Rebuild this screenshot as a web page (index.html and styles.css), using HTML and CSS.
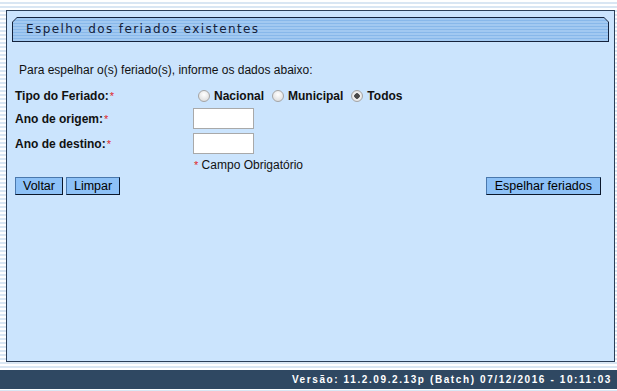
FILE: index.html
```html
<!DOCTYPE html>
<html lang="pt-BR">
<head>
    <meta charset="UTF-8">
    <title>Espelho dos feriados existentes</title>
    <link rel="stylesheet" href="styles.css">
</head>
<body>
    <div class="panel">
        <div class="panel-title">
            <div class="panel-title-inner">Espelho dos feriados existentes</div>
        </div>

        <div class="form">
            <p class="intro">Para espelhar o(s) feriado(s), informe os dados abaixo:</p>

            <div class="fields">
                <label class="field-label">Tipo do Feriado:<span class="req">*</span></label>
                <div class="radios">
                    <label><input type="radio" name="tipo" value="N"> Nacional</label>
                    <label><input type="radio" name="tipo" value="M"> Municipal</label>
                    <label><input type="radio" name="tipo" value="T" checked> Todos</label>
                </div>

                <label class="field-label" for="ano-origem">Ano de origem:<span class="req">*</span></label>
                <div><input type="text" id="ano-origem" class="year-input"></div>

                <label class="field-label" for="ano-destino">Ano de destino:<span class="req">*</span></label>
                <div><input type="text" id="ano-destino" class="year-input"></div>

                <div></div>
                <div class="hint"><span class="req">*</span> Campo Obrigatório</div>
            </div>

            <div class="actions">
                <div class="actions-left">
                    <button class="btn">Voltar</button>
                    <button class="btn">Limpar</button>
                </div>
                <button class="btn btn-wide">Espelhar feriados</button>
            </div>
        </div>
    </div>

    <div class="footer">Versão: 11.2.09.2.13p (Batch) 07/12/2016 - 10:11:03</div>
</body>
</html>
```

FILE: styles.css
```css
body {
    margin: 0;
    height: 391px;
    overflow: hidden;
    font-family: "Liberation Sans", Arial, sans-serif;
    font-size: 12px;
    color: #111;
    background: repeating-linear-gradient(to bottom, #ffffff 0 2px, #d9e6f3 2px 4px);
}
.panel {
    margin: 10px 2px 0 6px;
    height: 350px;
    background-color: #cbe4fd;
    border: 1px solid #2b3f58;
}
.panel-title {
    margin: 6px 5px 0 5px;
    height: 25px;
    padding: 1px;
    box-sizing: border-box;
    background-color: #14233d;
    clip-path: polygon(5px 0, calc(100% - 5px) 0, 100% 5px, 100% 100%, 0 100%, 0 5px);
}
.panel-title-inner {
    height: 100%;
    padding-left: 13px;
    font-family: "DejaVu Sans", Verdana, sans-serif;
    font-size: 12px;
    letter-spacing: 1.4px;
    line-height: 22px;
    color: #13203a;
    background: repeating-linear-gradient(to bottom, #a2c9f1 0 2px, #88b8ea 2px 3px);
    clip-path: polygon(4px 0, calc(100% - 4px) 0, 100% 4px, 100% 100%, 0 100%, 0 4px);
}
.form {
    padding: 0 13px 0 8px;
}
.intro {
    margin: 21px 0 0 4px;
    line-height: 14px;
}
.fields {
    display: grid;
    grid-template-columns: 178px auto;
    row-gap: 4px;
    margin-top: 11px;
}
.field-label {
    font-weight: bold;
    line-height: 16px;
    align-self: center;
}
.req {
    color: #e0262a;
    font-weight: normal;
    font-size: 11px;
    vertical-align: top;
    margin-left: 1px;
}
.radios {
    display: flex;
    align-items: center;
    height: 16px;
    font-weight: bold;
    font-size: 12px;
}
.radios label {
    display: flex;
    align-items: center;
    margin-right: 3px;
}
.radios input {
    appearance: none;
    width: 12px;
    height: 12px;
    margin: 0 4px 0 5px;
    border: 1px solid #a5a5a5;
    border-radius: 50%;
    background: radial-gradient(circle at 50% 35%, #ffffff, #d6d6d6);
}
.radios input:checked {
    background: radial-gradient(circle, #4a4a4a 0 2.5px, #f2f2f2 3px, #d6d6d6);
}
.year-input {
    display: block;
    width: 61px;
    height: 21px;
    box-sizing: border-box;
    margin: 0;
    border: 1px solid #a9a9a9;
    background-color: #fff;
}
.hint {
    line-height: 14px;
    font-size: 12px;
}
.actions {
    display: flex;
    justify-content: space-between;
    margin: 5px 0 0 0;
}
.actions-left {
    display: flex;
    gap: 3px;
}
.btn {
    height: 18px;
    padding: 0 7px;
    font-family: "Liberation Sans", Arial, sans-serif;
    font-size: 12.5px;
    line-height: 16px;
    color: #000;
    background-color: #8dc1f7;
    border: 1px solid;
    border-color: #4a78ad #0b172b #0b172b #4a78ad;
    border-radius: 0;
}
.btn-wide {
    padding: 0 8px;
}
.footer {
    margin-top: 8px;
    height: 19px;
    padding-right: 5px;
    text-align: right;
    font-weight: bold;
    font-size: 10px;
    letter-spacing: 1.6px;
    line-height: 19px;
    color: #fff;
    background-color: #2f4862;
}
```
